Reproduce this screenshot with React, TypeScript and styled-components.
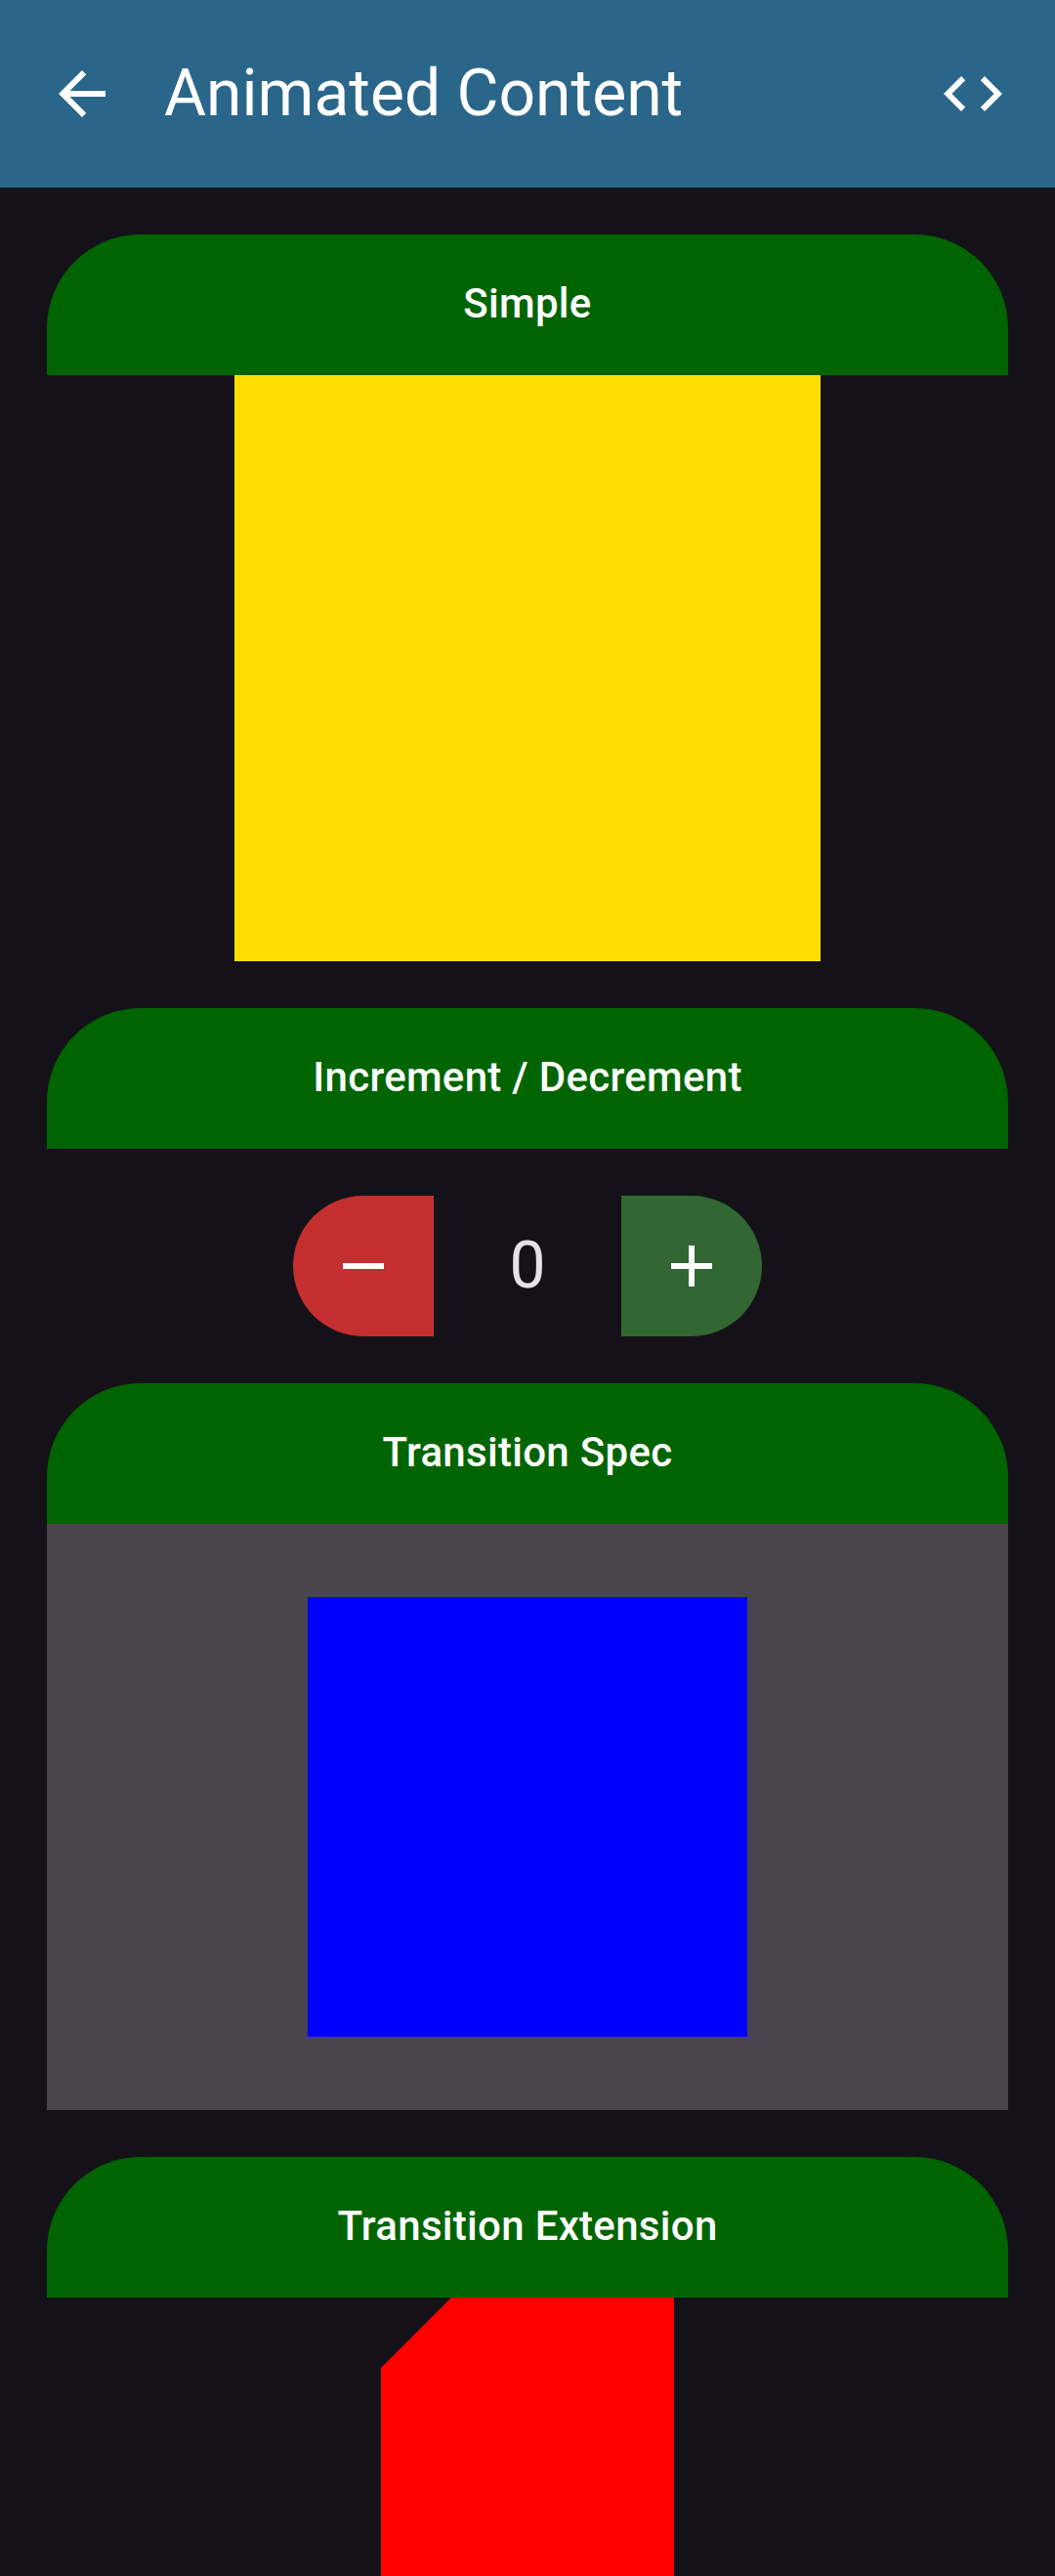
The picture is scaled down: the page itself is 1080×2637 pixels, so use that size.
import React from "react";
import styled, { createGlobalStyle } from "styled-components";

const GlobalStyle = createGlobalStyle`
  html, body {
    margin: 0;
    padding: 0;
    background: #141218;
    overflow: hidden;
  }
  body {
    font-family: Roboto, "Noto Sans", "Liberation Sans", sans-serif;
  }
`;

const Screen = styled.div`
  width: 1080px;
  height: 2637px;
  overflow: hidden;
  background: #141218;
  display: flex;
  flex-direction: column;
`;

const TopBar = styled.header`
  height: 192px;
  flex-shrink: 0;
  background: #2a6689;
  display: flex;
  align-items: center;
  padding: 0 12px;
  box-sizing: border-box;
`;

const IconButton = styled.button`
  width: 144px;
  height: 144px;
  border: none;
  background: transparent;
  padding: 0;
  display: flex;
  align-items: center;
  justify-content: center;
  color: #ffffff;
  flex-shrink: 0;
`;

const Title = styled.h1`
  flex: 1;
  margin: 0 0 0 12px;
  font-size: 66px;
  font-weight: 400;
  color: #ffffff;
  line-height: 1;
  letter-spacing: 0;
`;

const Content = styled.main`
  display: flex;
  flex-direction: column;
  gap: 48px;
  padding: 48px 48px 0;
`;

const Section = styled.section`
  display: flex;
  flex-direction: column;
  align-items: center;
`;

const SectionHeader = styled.div`
  width: 100%;
  height: 144px;
  box-sizing: border-box;
  padding-bottom: 3px;
  background: #006400;
  border-radius: 96px 96px 0 0;
  display: flex;
  align-items: center;
  justify-content: center;
  color: #ffffff;
  font-size: 42px;
  font-weight: 500;
  letter-spacing: 0.3px;
`;

const ColorSquare = styled.div<{ $size: number; $color: string }>`
  width: ${(p) => p.$size}px;
  height: ${(p) => p.$size}px;
  background: ${(p) => p.$color};
`;

const CounterRow = styled.div`
  margin-top: 48px;
  display: flex;
  align-items: center;
  justify-content: center;
`;

const StepButton = styled.button<{ $side: "start" | "end"; $color: string }>`
  width: 144px;
  height: 144px;
  border: none;
  padding: 0;
  background: ${(p) => p.$color};
  color: #ffffff;
  display: flex;
  align-items: center;
  justify-content: center;
  border-radius: ${(p) => (p.$side === "start" ? "72px 0 0 72px" : "0 72px 72px 0")};
`;

const CounterValue = styled.span`
  width: 192px;
  text-align: center;
  font-size: 66px;
  font-weight: 400;
  color: #e6e0e9;
  line-height: 1;
`;

const SpecPanel = styled.div`
  width: 100%;
  height: 600px;
  background: #49454f;
  display: flex;
  align-items: center;
  justify-content: center;
`;

const CutBox = styled.div`
  width: 300px;
  height: 300px;
  background: #ff0000;
  clip-path: polygon(72px 0, 100% 0, 100% 100%, 0 100%, 0 72px);
`;

const Icon = ({ d, size = 72 }: { d: string; size?: number }) => (
  <svg width={size} height={size} viewBox="0 0 24 24" fill="currentColor">
    <path d={d} />
  </svg>
);

const ARROW_BACK = "M20 11H7.83l5.59-5.59L12 4l-8 8 8 8 1.41-1.41L7.83 13H20v-2z";
const CODE = "M9.4 16.6L4.8 12l4.6-4.6L8 6l-6 6 6 6 1.4-1.4zm5.2 0l4.6-4.6-4.6-4.6L16 6l6 6-6 6-1.4-1.4z";
const REMOVE = "M19 13H5v-2h14v2z";
const ADD = "M19 13h-6v6h-2v-6H5v-2h6V5h2v6h6v2z";

export default function App() {
  const [count, setCount] = React.useState(0);
  return (
    <>
      <GlobalStyle />
      <Screen>
        <TopBar>
          <IconButton aria-label="Back">
            <Icon d={ARROW_BACK} />
          </IconButton>
          <Title>Animated Content</Title>
          <IconButton aria-label="Source code">
            <Icon d={CODE} />
          </IconButton>
        </TopBar>
        <Content>
          <Section>
            <SectionHeader>Simple</SectionHeader>
            <ColorSquare $size={600} $color="#ffdd00" />
          </Section>
          <Section>
            <SectionHeader>Increment / Decrement</SectionHeader>
            <CounterRow>
              <StepButton $side="start" $color="#c62f2f" onClick={() => setCount((c) => c - 1)}>
                <Icon d={REMOVE} />
              </StepButton>
              <CounterValue>{count}</CounterValue>
              <StepButton $side="end" $color="#326633" onClick={() => setCount((c) => c + 1)}>
                <Icon d={ADD} />
              </StepButton>
            </CounterRow>
          </Section>
          <Section>
            <SectionHeader>Transition Spec</SectionHeader>
            <SpecPanel>
              <ColorSquare $size={450} $color="#0000ff" />
            </SpecPanel>
          </Section>
          <Section>
            <SectionHeader>Transition Extension</SectionHeader>
            <CutBox />
          </Section>
        </Content>
      </Screen>
    </>
  );
}
